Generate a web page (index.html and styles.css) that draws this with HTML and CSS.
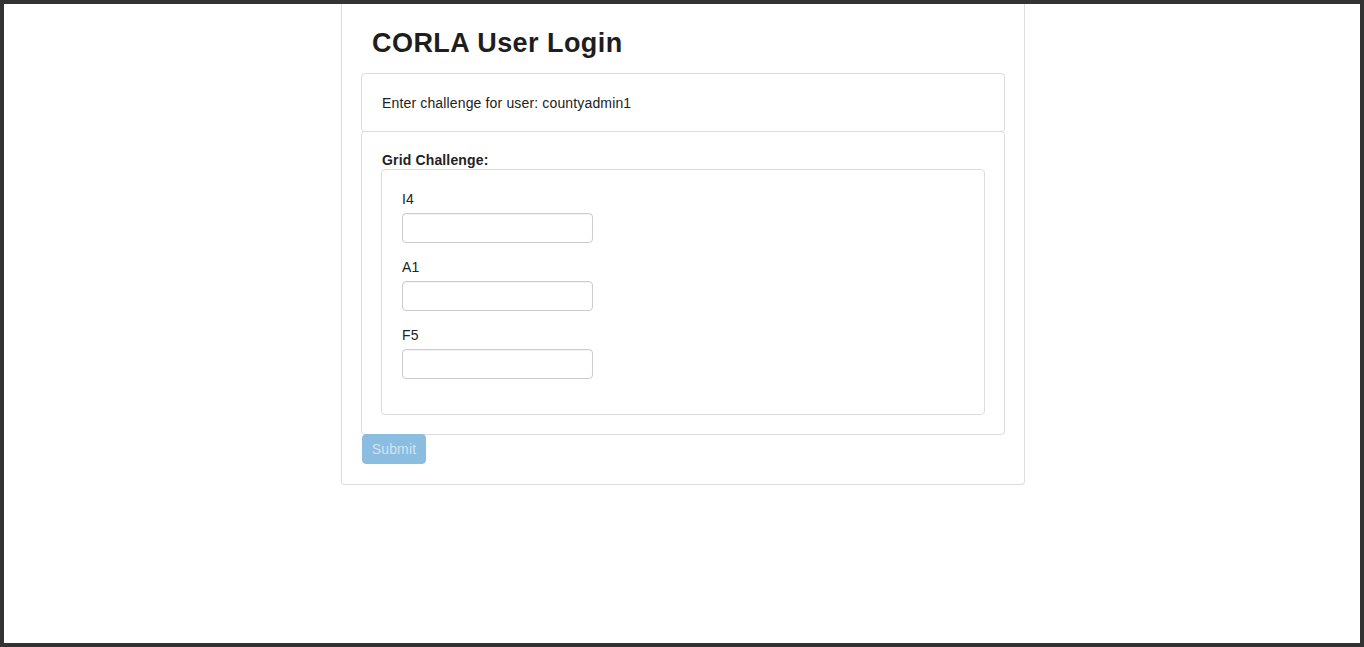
FILE: index.html
```html
<!DOCTYPE html>
<html>
<head>
<meta charset="utf-8">
<title>CORLA User Login</title>
<link rel="stylesheet" href="styles.css">
</head>
<body>
<div class="frame">
  <div class="login-panel">
    <h2 class="title">CORLA User Login</h2>
    <div class="card card-first">Enter challenge for user: countyadmin1</div>
    <div class="card card-grid">
      <div class="grid-label">Grid Challenge:</div>
      <div class="grid-box">
        <div class="form-group">
          <label class="field-label">I4</label>
          <input class="field-input" type="text">
        </div>
        <div class="form-group">
          <label class="field-label">A1</label>
          <input class="field-input" type="text">
        </div>
        <div class="form-group">
          <label class="field-label">F5</label>
          <input class="field-input" type="text">
        </div>
      </div>
    </div>
    <button class="submit-btn" type="button" disabled>Submit</button>
  </div>
</div>
</body>
</html>
```

FILE: styles.css
```css
html, body {
  margin: 0;
  padding: 0;
  background: #ffffff;
}

body {
  font-family: "Liberation Sans", Arial, sans-serif;
  font-size: 14px;
  line-height: 20px;
  letter-spacing: 0.15px;
  color: #222222;
}

.frame {
  box-sizing: border-box;
  width: 1364px;
  height: 647px;
  border: 4px solid #333333;
  background: #ffffff;
  overflow: hidden;
}

.login-panel {
  box-sizing: border-box;
  width: 684px;
  margin-left: 337px;
  border: 1px solid #dddddd;
  border-top: none;
  border-radius: 0 0 4px 4px;
  padding: 25px 19px 20px 19px;
}

.title {
  margin: 0 0 16px 0;
  padding-left: 11px;
  font-size: 27px;
  line-height: 28px;
  letter-spacing: 0.45px;
  font-weight: bold;
  color: #1e1e1e;
}

.card {
  border: 1px solid #dddddd;
  border-radius: 4px;
}

.card-first {
  padding: 19px 19px 18px 20px;
  line-height: 20px;
}

.card-grid {
  margin-top: -1px;
  padding: 18px 19px 19px 19px;
}

.grid-label {
  font-weight: bold;
  line-height: 20px;
  margin-bottom: -1px;
  padding-left: 1px;
}

.grid-box {
  border: 1px solid #dddddd;
  border-radius: 4px;
  padding: 19px 20px 21px 20px;
}

.form-group {
  display: flex;
  flex-direction: column;
  align-items: flex-start;
  margin-bottom: 14px;
}

.field-label {
  line-height: 20px;
  margin-bottom: 4px;
}

.field-input {
  box-sizing: border-box;
  width: 191px;
  height: 30px;
  border: 1px solid #cccccc;
  border-radius: 4px;
  background: #ffffff;
  padding: 4px 8px;
  font-family: inherit;
  font-size: 14px;
  box-shadow: inset 0 1px 1px rgba(0, 0, 0, 0.05);
}

.submit-btn {
  display: block;
  box-sizing: border-box;
  margin: -1px 0 0 1px;
  width: 64px;
  height: 30px;
  padding: 0;
  border: 1px solid #8abde0;
  border-radius: 4px;
  background: #8abde0;
  color: #cfe4f3;
  font-family: "Liberation Sans", Arial, sans-serif;
  font-size: 14px;
  line-height: 28px;
  letter-spacing: 0.15px;
  text-align: center;
}
```
